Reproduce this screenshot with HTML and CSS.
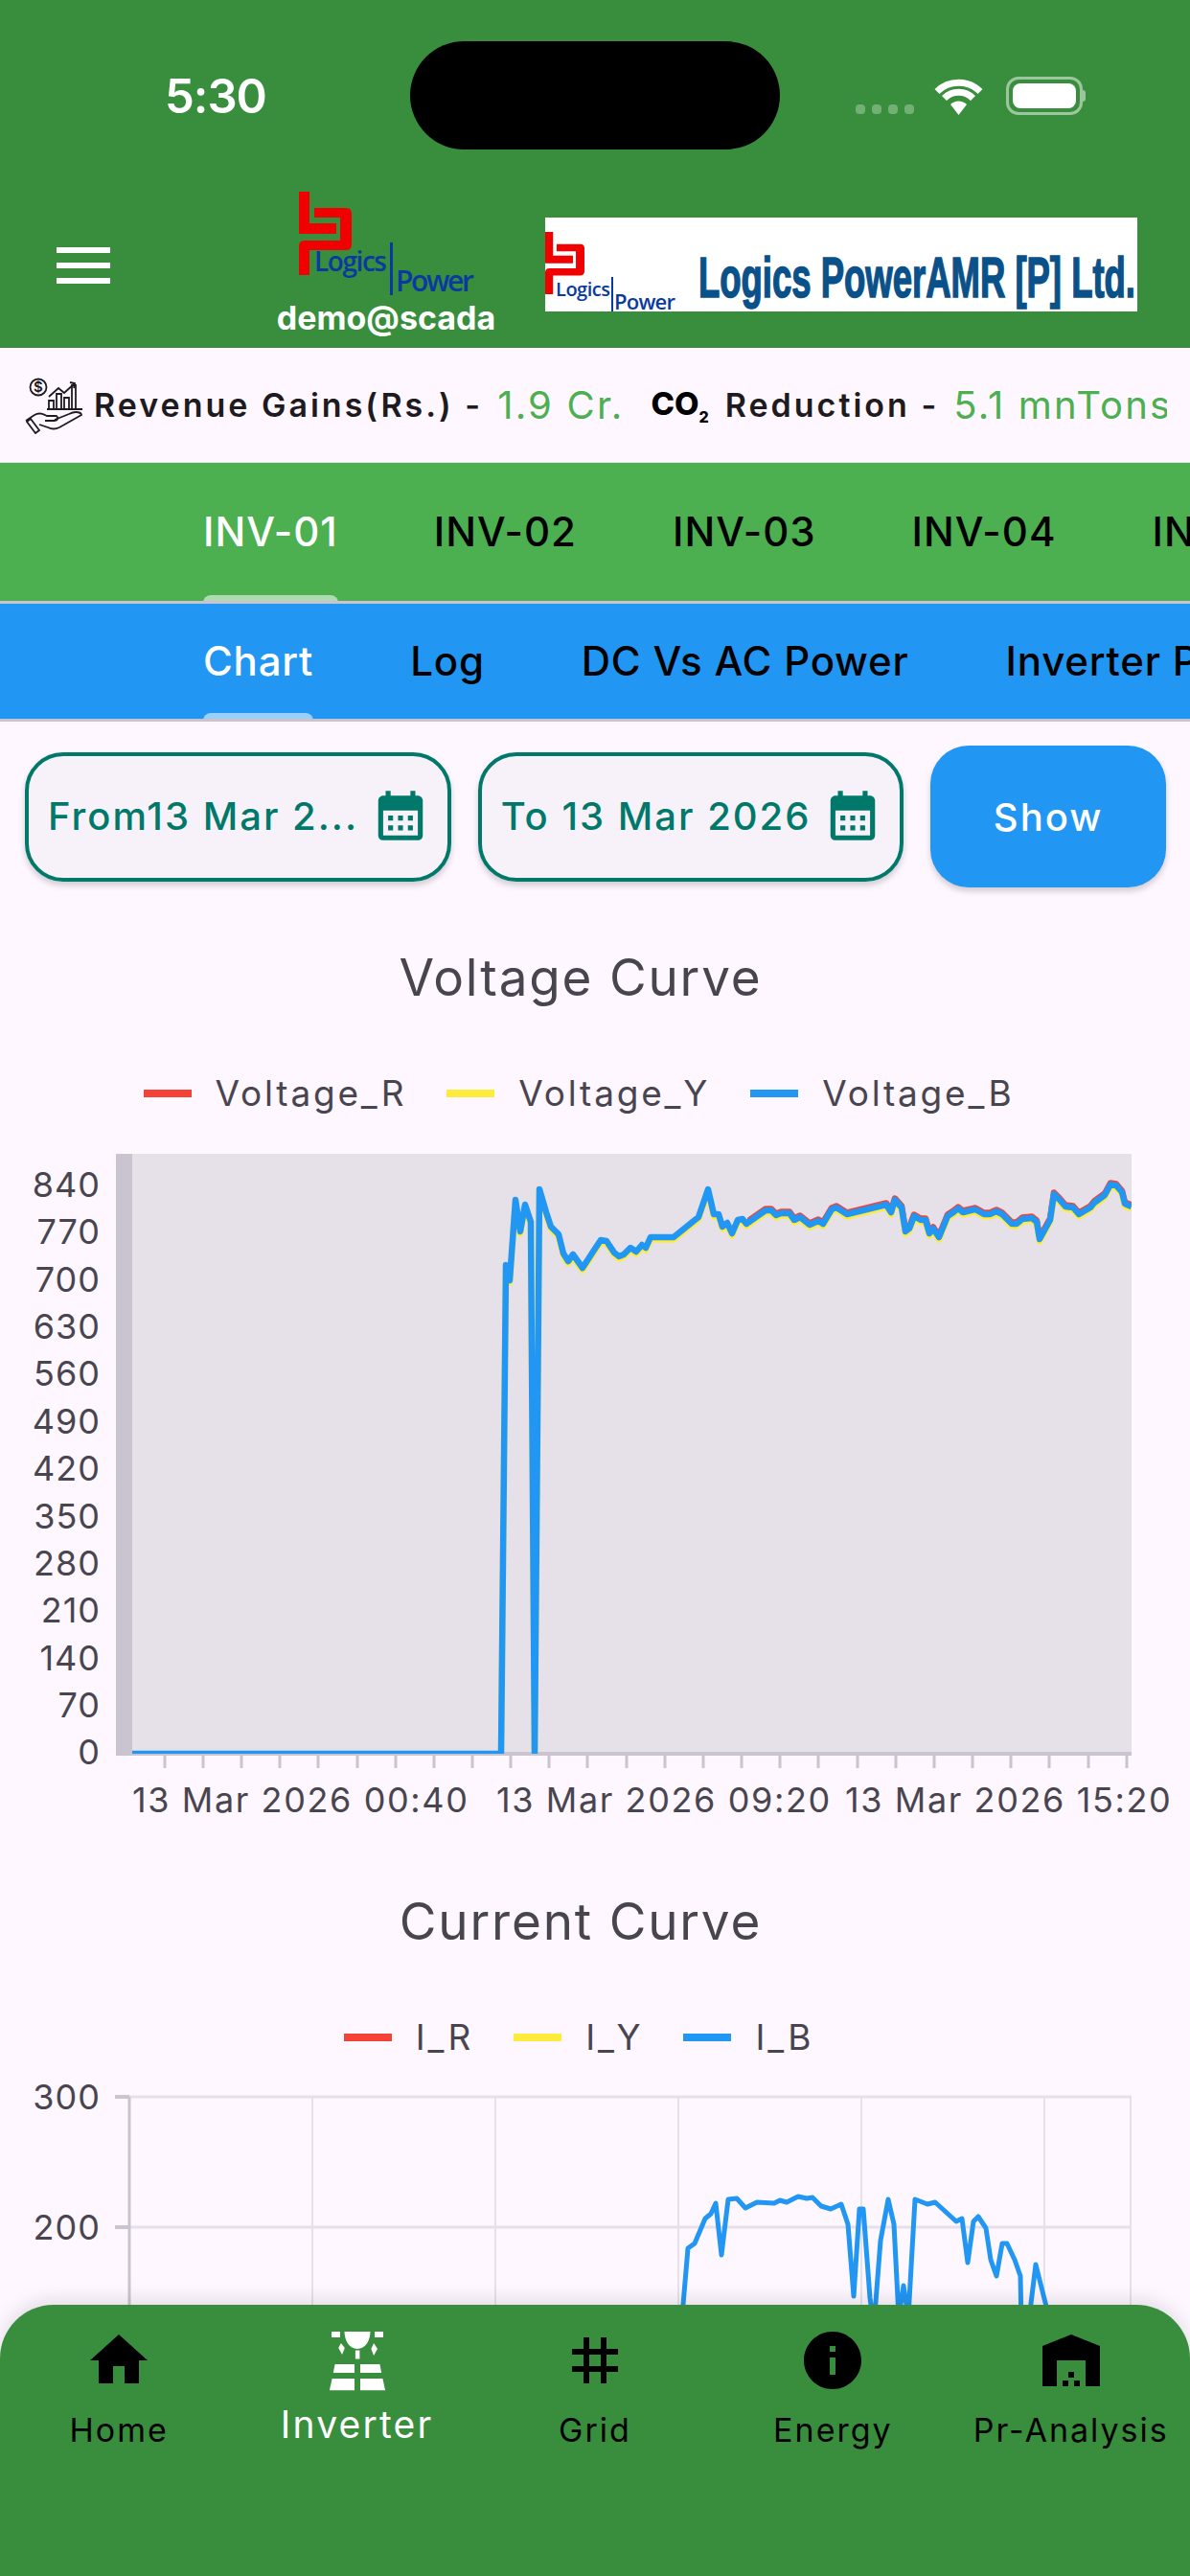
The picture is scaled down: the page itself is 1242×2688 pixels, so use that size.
FILE: index.html
```html
<!DOCTYPE html>
<html lang="en">
  <head>
    <meta charset="UTF-8" />
    <meta name="viewport" content="width=device-width, initial-scale=1.0" />
    <title>Inverter</title>
    <link rel="stylesheet" href="styles.css">
  </head>
  <body>
    <svg class="defs" width="0" height="0">
      <symbol id="lp-mark" viewBox="312 200 55 87">
        <path fill="#f00000" d="M312 200h11v33h28v11h-39z" />
        <path fill="#f00000" d="M328 217H361Q367 217 367 223V255Q367 261 361 261H323V287H312V257Q312 251 318 251H355V227H328Z" />
      </symbol>
      <symbol id="calendar" viewBox="0 0 24 24">
        <path fill="#00796b" d="M19 4h-1V2h-2v2H8V2H6v2H5c-1.11 0-1.99.9-1.99 2L3 20c0 1.1.89 2 2 2h14c1.1 0 2-.9 2-2V6c0-1.1-.9-2-2-2zm0 16H5V10h14v10zM9 14H7v-2h2v2zm4 0h-2v-2h2v2zm4 0h-2v-2h2v2zm-8 4H7v-2h2v2zm4 0h-2v-2h2v2zm4 0h-2v-2h2v2z" />
      </symbol>
    </svg>

    <header class="topbar">
      <div class="island"></div>
      <div class="status">
        <span class="time">5:30</span>
        <div class="status-icons">
          <div class="signal"><i></i><i></i><i></i><i></i></div>
          <svg class="wifi" width="51" height="38" viewBox="0 0 51 38">
            <g fill="none" stroke="#fff" stroke-width="7">
              <path d="M3 13.500A32 32 0 0 1 48 13.500" />
              <path d="M10.500 20.500A21 21 0 0 1 40.500 20.500" />
            </g>
            <path fill="#fff" d="M25.500 38L17 27A12 12 0 0 1 34 27z" />
          </svg>
          <div class="battery"><div class="battery-fill"></div></div>
        </div>
      </div>
      <div class="appbar">
        <div class="menu"><i></i><i></i><i></i></div>
        <div class="brand">
          <svg class="brand-logo" width="190" height="110" viewBox="0 0 190 110">
            <use href="#lp-mark" x="0" y="0" width="55" height="87" />
            <rect x="95" y="53" width="3" height="55" fill="#0a3aa0" />
            <text class="logo-text" x="16" y="83" font-size="28" textLength="76">Logics</text>
            <text class="logo-text" x="101" y="104" font-size="30" textLength="82">Power</text>
          </svg>
          <div class="brand-user">demo@scada</div>
        </div>
        <svg class="banner" width="618" height="98" viewBox="0 0 618 98">
          <rect width="618" height="98" fill="#fff" />
          <use href="#lp-mark" x="0" y="15" width="41" height="65" />
          <rect x="69" y="62" width="2" height="36" fill="#0a3aa0" />
          <text class="logo-text" x="11" y="82" font-size="20" textLength="57">Logics</text>
          <text class="logo-text" x="72" y="96" font-size="22" textLength="64">Power</text>
          <text class="banner-text" x="160" y="83" font-size="60" textLength="456" lengthAdjust="spacingAndGlyphs">Logics PowerAMR [P] Ltd.</text>
        </svg>
      </div>
    </header>

    <section class="stats">
      <svg class="stats-icon" width="60" height="60" viewBox="0 0 60 60">
        <g fill="none" stroke="#1d1b20" stroke-width="1.800">
          <circle cx="14" cy="11" r="8.500" />
          <path d="M25 21l10-9 6 5 11-10M47 6l5 1-1 5" />
          <path d="M25 33v-8h5v8M33 33V18h5v15M41 33V22h5v11M49 33V9h4v24M23 34h37" />
          <path d="M1 46l9-6c5-3 9-1 13 1h9c3 0 3 5-1 5H21" />
          <path d="M31 45l15-6c8-4 13-1 13 1L36 53c-4 2-8 2-12 0l-9-3" />
          <path d="M2 47l9 12 4-3-9-12z" />
        </g>
        <text class="dollar" x="14" y="16" text-anchor="middle">$</text>
      </svg>
      <span class="stat-label">Revenue Gains(Rs.) -</span>
      <span class="stat-value">1.9 Cr.</span>
      <span class="stat-co">CO<sub>2</sub></span>
      <span class="stat-label stat-after-co">Reduction -</span>
      <span class="stat-value stat-last">5.1 mnTons</span>
    </section>

    <nav class="tabs tabs-green">
      <div class="tab active">INV-01</div>
      <div class="tab">INV-02</div>
      <div class="tab">INV-03</div>
      <div class="tab">INV-04</div>
      <div class="tab">INV-05</div>
    </nav>
    <nav class="tabs tabs-blue">
      <div class="tab active">Chart</div>
      <div class="tab">Log</div>
      <div class="tab">DC Vs AC Power</div>
      <div class="tab">Inverter Performance</div>
    </nav>

    <div class="filters">
      <div class="date-btn">
        <span>From13 Mar 2...</span>
        <svg width="62" height="62"><use href="#calendar" /></svg>
      </div>
      <div class="date-btn">
        <span>To 13 Mar 2026</span>
        <svg width="62" height="62"><use href="#calendar" /></svg>
      </div>
      <div class="show-btn">Show</div>
    </div>

    <section class="chart chart-voltage">
      <h2 class="chart-title">Voltage Curve</h2>
      <div class="legend">
        <div class="legend-item"><i class="red"></i>Voltage_R</div>
        <div class="legend-item"><i class="yellow"></i>Voltage_Y</div>
        <div class="legend-item"><i class="blue"></i>Voltage_B</div>
      </div>
      <svg class="plot" width="1242" height="710" viewBox="0 1195 1242 710">
        <defs>
          <clipPath id="voltage-clip"><rect x="138" y="1204" width="1043" height="626" /></clipPath>
          <clipPath id="voltage-red-clip"><rect x="780" y="1204" width="401" height="626" /></clipPath>
          <polyline id="voltage-line" fill="none" stroke-width="6.500" stroke-linejoin="round" points="138,1830 523,1830 528,1320 532,1336 538,1252 543,1285 548,1257 554,1275 558,1832 563,1241 570,1265 575,1280 583,1288 588,1308 593,1316 598,1309 608,1323 621,1303 627,1294 633,1295 641,1307 646,1311 651,1309 658,1302 664,1306 670,1299 674,1302 679,1291 703,1291 729,1270 739,1241 745,1267 750,1267 754,1280 759,1276 764,1287 770,1273 775,1272 779,1277 799,1263 805,1263 810,1268 815,1266 824,1266 829,1273 835,1270 845,1278 854,1274 859,1277 868,1262 873,1260 884,1267 925,1257 930,1265 934,1252 941,1260 945,1285 949,1282 954,1269 961,1273 966,1273 970,1287 974,1282 980,1291 989,1269 995,1265 1000,1261 1005,1265 1018,1262 1027,1267 1033,1267 1040,1264 1046,1267 1056,1277 1061,1277 1067,1272 1077,1271 1082,1275 1085,1293 1096,1273 1100,1246 1106,1252 1112,1259 1120,1260 1126,1267 1138,1260 1142,1255 1153,1247 1159,1236 1165,1237 1171,1244 1174,1256 1181,1259" />
        </defs>
        <rect class="plot-bg" x="138" y="1204" width="1043" height="626" />
        <rect class="axis-band" x="121" y="1204" width="17" height="628" />
        <rect class="axis-band" x="121" y="1828" width="1060" height="4" />
        <path class="ticks" d="M172 1830v15M212 1830v15M252 1830v15M292 1830v15M332 1830v15M373 1830v15M413 1830v15M453 1830v15M493 1830v15M533 1830v15M573 1830v15M613 1830v15M654 1830v15M694 1830v15M734 1830v15M774 1830v15M814 1830v15M854 1830v15M895 1830v15M935 1830v15M975 1830v15M1015 1830v15M1055 1830v15M1095 1830v15M1136 1830v15M1176 1830v15" />
        <g clip-path="url(#voltage-red-clip)">
          <use href="#voltage-line" stroke="#f44336" y="-1.500" />
        </g>
        <g clip-path="url(#voltage-clip)">
          <use href="#voltage-line" stroke="#ffeb3b" y="2.500" />
          <use href="#voltage-line" stroke="#2196f3" />
        </g>
        <g class="y-labels">
          <text x="105" y="1249">840</text>
          <text x="105" y="1298">770</text>
          <text x="105" y="1348">700</text>
          <text x="105" y="1397">630</text>
          <text x="105" y="1446">560</text>
          <text x="105" y="1496">490</text>
          <text x="105" y="1545">420</text>
          <text x="105" y="1595">350</text>
          <text x="105" y="1644">280</text>
          <text x="105" y="1693">210</text>
          <text x="105" y="1743">140</text>
          <text x="105" y="1792">70</text>
          <text x="105" y="1841">0</text>
        </g>
        <g class="x-labels">
          <text x="138" y="1891">13 Mar 2026 00:40</text>
          <text x="518" y="1891">13 Mar 2026 09:20</text>
          <text x="882" y="1891">13 Mar 2026 15:20</text>
        </g>
      </svg>
    </section>

    <section class="chart chart-current">
      <h2 class="chart-title">Current Curve</h2>
      <div class="legend">
        <div class="legend-item"><i class="red"></i>I_R</div>
        <div class="legend-item"><i class="yellow"></i>I_Y</div>
        <div class="legend-item"><i class="blue"></i>I_B</div>
      </div>
      <svg class="plot" width="1242" height="250" viewBox="0 2170 1242 250">
        <path class="grid-h" d="M135 2190H1181M135 2326H1181" />
        <path class="grid-v" d="M326 2190V2420M517 2190V2420M708 2190V2420M899 2190V2420M1090 2190V2420M1180 2190V2420" />
        <path class="axis-line" d="M135 2190V2420" />
        <path class="axis-tick" d="M120 2190H135M120 2326H135" />
        <polyline class="current-line" points="711,2430 718,2348 725,2343 736,2317 742,2312 747,2301 753,2355 760,2297 769,2296 778,2306 790,2300 808,2301 814,2298 821,2300 833,2294 842,2296 848,2295 857,2304 867,2307 878,2302 885,2323 891,2398 897,2307 901,2307 908,2400 912,2430 919,2340 927,2297 933,2323 938,2420 943,2387 948,2420 955,2297 968,2302 976,2300 987,2310 998,2320 1004,2317 1010,2363 1016,2320 1021,2315 1029,2327 1034,2360 1040,2377 1046,2343 1051,2343 1059,2360 1065,2377 1066,2430 1073,2430 1081,2365 1089,2397 1095,2420" />
        <g class="y-labels">
          <text x="105" y="2203">300</text>
          <text x="105" y="2339">200</text>
        </g>
      </svg>
    </section>

    <footer class="bottom-nav">
      <div class="nav-item">
        <svg width="72" height="72" viewBox="0 0 24 24"><path d="M10 20v-6h4v6h5v-8h3L12 3 2 12h3v8z" /></svg>
        <span>Home</span>
      </div>
      <div class="nav-item selected">
        <svg width="72" height="72" viewBox="0 0 24 24"><path d="M3 2h3v2H3zM18 2h3v2h-3zM7.500 2h9c0 3-1.700 6-4.500 6S7.500 5 7.500 2zM11.300 8.500h1.500v3h-1.500zM6.300 6l1.300 1.700-.9 2.300-1.300-2.300zM17.700 6l1.300 2-1.300 2.300-.9-2.300zM4.200 13.300H11v3H3.600zM13 13.300h6.800l.6 3H13zM3.200 18.300H11v4.100H2.300zM13 18.300h7.800l.9 4.100H13z" /></svg>
        <span>Inverter</span>
      </div>
      <div class="nav-item">
        <svg width="72" height="72" viewBox="0 0 24 24"><path d="M20 10V8h-4V4h-2v4h-4V4H8v4H4v2h4v4H4v2h4v4h2v-4h4v4h2v-4h4v-2h-4v-4h4zm-6 4h-4v-4h4v4z" /></svg>
        <span>Grid</span>
      </div>
      <div class="nav-item">
        <svg width="72" height="72" viewBox="0 0 24 24"><path d="M12 2C6.480 2 2 6.480 2 12s4.480 10 10 10 10-4.480 10-10S17.520 2 12 2zm1 15h-2v-6h2v6zm0-8h-2V7h2v2z" /></svg>
        <span>Energy</span>
      </div>
      <div class="nav-item">
        <svg width="72" height="72" viewBox="0 0 24 24"><path d="M22 21V7L12 3 2 7v14h5v-9h10v9h5zm-11-2H9v2h2v-2zm2-3h-2v2h2v-2zm2 3h-2v2h2v-2z" /></svg>
        <span>Pr-Analysis</span>
      </div>
    </footer>
  </body>
</html>
```
FILE: styles.css
```css
* {
  box-sizing: border-box;
}

html,
body {
  margin: 0;
  height: 2688px;
}

body {
  position: relative;
  width: 1242px;
  overflow: hidden;
  background: #fef7ff;
  font-family: Inter, "Noto Sans", sans-serif;
  color: #000;
}

.defs {
  position: absolute;
}

/* top green header */
.topbar {
  position: relative;
  height: 363px;
  padding-top: 80px;
  background: #388e3c;
}

.island {
  position: absolute;
  left: 428px;
  top: 43px;
  width: 386px;
  height: 113px;
  border-radius: 57px;
  background: #000;
}

.status {
  display: flex;
  justify-content: space-between;
  align-items: center;
  height: 40px;
  padding: 0 112px 0 172px;
}

.time {
  color: #fff;
  font-size: 49px;
  font-weight: 600;
  letter-spacing: -1px;
}

.status-icons {
  display: flex;
  align-items: flex-end;
  gap: 24px;
}

.signal {
  display: flex;
  gap: 7px;
  margin-right: -3px;
  padding-bottom: 1px;
}

.signal i {
  width: 10px;
  height: 10px;
  border-radius: 4px;
  background: rgba(255, 255, 255, 0.3);
}

.wifi {
  display: block;
}

.battery {
  position: relative;
  width: 80px;
  height: 40px;
  padding: 4px;
  border: 3px solid rgba(255, 255, 255, 0.5);
  border-radius: 13px;
}

.battery::after {
  content: "";
  position: absolute;
  right: -6px;
  top: 11px;
  width: 3px;
  height: 12px;
  border-radius: 0 3px 3px 0;
  background: rgba(255, 255, 255, 0.5);
}

.battery-fill {
  width: 100%;
  height: 100%;
  border-radius: 8px;
  background: #fff;
}

.appbar {
  display: flex;
  align-items: flex-start;
  padding: 80px 0 0 59px;
}

.menu {
  display: flex;
  flex-direction: column;
  gap: 10px;
  width: 56px;
  margin-top: 58px;
}

.menu i {
  display: block;
  height: 6px;
  background: #fff;
}

.brand {
  width: 240px;
  margin-left: 168px;
}

.brand-logo {
  display: block;
  margin-left: 29px;
}

.brand-user {
  margin-top: 2px;
  color: #fff;
  font-size: 34px;
  font-weight: 700;
  line-height: 40px;
  text-align: center;
  white-space: nowrap;
}

.banner {
  display: block;
  margin-top: 27px;
  margin-left: 46px;
}

.logo-text {
  fill: #0a3aa0;
  font-family: "Open Sans", sans-serif;
  font-weight: 600;
}

.banner-text {
  fill: #0b5189;
  stroke: #0b5189;
  stroke-width: 1.6;
  font-family: "Liberation Sans", sans-serif;
  font-weight: 700;
}

/* revenue strip */
.stats {
  display: flex;
  align-items: center;
  height: 120px;
  padding-left: 26px;
  overflow: hidden;
  white-space: nowrap;
  border-bottom: 1px solid #e6e0e9;
}

.stats-icon {
  flex: none;
  margin-right: 12px;
}

.stat-label {
  color: #1d1b20;
  font-size: 34px;
  font-weight: 600;
  letter-spacing: 3px;
}

.stat-value {
  margin-left: 15px;
  color: #4caf50;
  font-size: 40px;
  font-weight: 400;
  letter-spacing: 2.2px;
}

.stat-co {
  margin-left: 28px;
  font-size: 33px;
  font-weight: 800;
}

.stat-co sub {
  font-size: 16px;
}

.stat-after-co {
  margin-left: 17px;
}

.stat-last {
  display: block;
  flex: none;
  width: 223px;
  overflow: hidden;
}

.dollar {
  font-size: 15px;
  font-weight: 600;
  fill: #1d1b20;
}

/* tab bars */
.tabs {
  display: flex;
  align-items: center;
  overflow: hidden;
  gap: 101px;
  padding-left: 212px;
  white-space: nowrap;
  border-bottom: 3px solid #cac4d0;
}

.tabs-green {
  height: 147px;
  background: #4caf50;
  gap: 100px;
}

.tabs-blue {
  height: 123px;
  background: #2196f3;
}

.tab {
  position: relative;
  font-size: 42px;
  font-weight: 500;
  line-height: 48px;
  letter-spacing: 1px;
}

.tabs-blue .tab {
  letter-spacing: 0.8px;
}

.tab.active {
  color: #fff;
}

.tab.active::after {
  content: "";
  position: absolute;
  left: 0;
  right: 0;
  height: 9px;
  border-radius: 8px 8px 0 0;
  background: rgba(255, 255, 255, 0.55);
}

.tabs-green .tab.active::after {
  top: 90px;
}

.tabs-blue .tab.active::after {
  top: 78px;
}

/* date filters */
.filters {
  display: flex;
  align-items: center;
  gap: 28px;
  padding: 25px 25px 0 26px;
}

.date-btn {
  display: flex;
  align-items: center;
  justify-content: space-between;
  width: 445px;
  height: 135px;
  padding: 0 18px 2px 20px;
  border: 4px solid #00796b;
  border-radius: 40px;
  background: #f7f2fa;
  box-shadow: 0 4px 6px rgba(0, 0, 0, 0.18);
  color: #00796b;
  font-size: 40px;
  font-weight: 500;
  letter-spacing: 2px;
  white-space: nowrap;
}

.show-btn {
  display: flex;
  align-items: center;
  justify-content: center;
  width: 246px;
  height: 148px;
  border-radius: 40px;
  background: #2196f3;
  box-shadow: 0 4px 6px rgba(0, 0, 0, 0.18);
  color: #fff;
  font-size: 40px;
  font-weight: 500;
  letter-spacing: 2px;
}

/* charts */
.chart-title {
  margin: 0;
  padding-right: 30px;
  color: #49454f;
  font-size: 53px;
  font-weight: 400;
  line-height: 64px;
  text-align: center;
  letter-spacing: 1.8px;
}

.chart-voltage {
  margin-top: 62px;
}

.chart-current {
  margin-top: 68px;
}

.legend {
  display: flex;
  justify-content: center;
  gap: 42px;
  margin-top: 66px;
  padding-right: 34px;
  color: #49454f;
  font-size: 37px;
  line-height: 46px;
  letter-spacing: 2.8px;
}

.legend-item {
  display: flex;
  align-items: center;
  gap: 25px;
}

.legend-item i {
  width: 50px;
  height: 8px;
}

.red {
  background: #f44336;
}

.yellow {
  background: #ffeb3b;
}

.blue {
  background: #2196f3;
}

.plot {
  display: block;
  margin-top: 31px;
}

.chart-current .plot {
  margin-top: 19px;
}

.plot text {
  fill: #49454f;
  font-size: 36px;
  letter-spacing: 1px;
}

.plot .x-labels text {
  letter-spacing: 1.600px;
}

.y-labels text {
  text-anchor: end;
}

.plot-bg {
  fill: #e6e0e9;
}

.axis-band {
  fill: #cac4d0;
}

.ticks {
  stroke: #cac4d0;
  stroke-width: 3;
}

.grid-h {
  stroke: #e6e0e9;
  stroke-width: 3;
}

.grid-v {
  stroke: #e6e0e9;
  stroke-width: 2;
}

.axis-line {
  stroke: #cac4d0;
  stroke-width: 3;
}

.axis-tick {
  stroke: #cac4d0;
  stroke-width: 4;
}

.current-line {
  fill: none;
  stroke: #2196f3;
  stroke-width: 5;
  stroke-linejoin: round;
}

/* bottom nav lies over the page */
.bottom-nav {
  position: absolute;
  left: 0;
  right: 0;
  bottom: 0;
  display: grid;
  grid-template-columns: repeat(5, 1fr);
  height: 283px;
  padding-top: 22px;
  border-radius: 56px 56px 0 0;
  background: #388e3c;
  box-shadow: 0 -6px 18px rgba(0, 0, 0, 0.1);
}

.nav-item {
  display: flex;
  flex-direction: column;
  align-items: center;
  font-size: 34px;
  line-height: 40px;
  letter-spacing: 2px;
  white-space: nowrap;
}

.nav-item svg {
  display: block;
  margin-bottom: 17px;
}

.nav-item.selected {
  color: #fff;
  fill: #fff;
  font-size: 39px;
  letter-spacing: 2.200px;
}

.nav-item.selected svg {
  margin-bottom: 11px;
}
```
